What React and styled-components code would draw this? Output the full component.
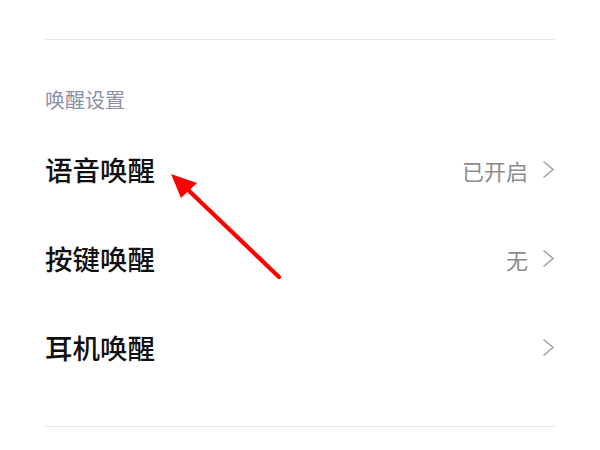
import React from "react";
import styled, { createGlobalStyle } from "styled-components";

const Global = createGlobalStyle`
  html, body { margin: 0; padding: 0; background: #ffffff; }
  body { font-family: "Noto Sans CJK SC", "Noto Sans", sans-serif; }
`;

const Page = styled.div`
  position: relative;
  width: 600px;
  height: 450px;
  padding: 39px 45px 0;
  box-sizing: border-box;
  background: #ffffff;
`;

const Divider = styled.div`
  height: 1px;
  background: #e6e6e6;
`;

const SectionTitle = styled.div`
  padding-top: 44px;
  padding-bottom: 9px;
  height: 32px;
  line-height: 32px;
  font-size: 20px;
  color: #8b90a8;
`;

const List = styled.div`
  display: flex;
  flex-direction: column;
  padding-bottom: 34px;
`;

const Row = styled.div`
  height: 89px;
  display: flex;
  align-items: center;
  justify-content: space-between;
`;

const Title = styled.div`
  font-size: 27.5px;
  font-weight: 500;
  color: #111111;
  line-height: 1;
`;

const Right = styled.div`
  display: flex;
  align-items: center;
  gap: 14px;
`;

const Value = styled.span`
  font-size: 22px;
  color: #8c8c8c;
  line-height: 1;
`;

const Chevron = () => (
  <svg width="13" height="19" viewBox="0 0 13 19" fill="none">
    <path d="M1.5 1.5 L11 9.5 L1.5 17.5" stroke="#a3a3a3" strokeWidth="1.6" strokeLinejoin="miter" />
  </svg>
);

const ArrowOverlay = styled.svg`
  position: absolute;
  left: 0;
  top: 0;
  pointer-events: none;
`;

const rows = [
  { title: "语音唤醒", value: "已开启" },
  { title: "按键唤醒", value: "无" },
  { title: "耳机唤醒", value: "" },
];

export default function App() {
  return (
    <>
      <Global />
      <Page>
        <Divider />
        <SectionTitle>唤醒设置</SectionTitle>
        <List>
          {rows.map((r) => (
            <Row key={r.title}>
              <Title>{r.title}</Title>
              <Right>
                {r.value && <Value>{r.value}</Value>}
                <Chevron />
              </Right>
            </Row>
          ))}
        </List>
        <Divider />
        <ArrowOverlay width="600" height="450" viewBox="0 0 600 450">
          <line x1="279" y1="277" x2="184" y2="186" stroke="#ff0000" strokeWidth="4.2" strokeLinecap="round" />
          <polygon points="171,174 197,183 181,198" fill="#ff0000" />
        </ArrowOverlay>
      </Page>
    </>
  );
}
